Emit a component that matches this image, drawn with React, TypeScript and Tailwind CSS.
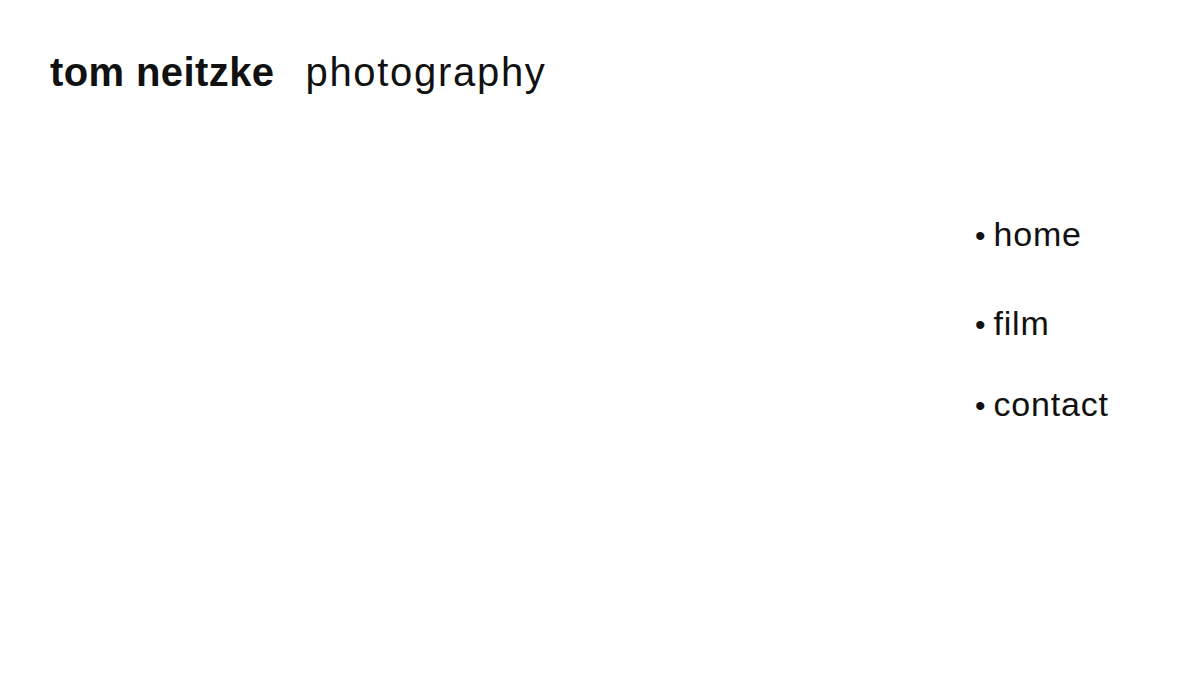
export default function App() {
  const navItems = [
    { label: 'home', mt: 'mt-0' },
    { label: 'film', mt: 'mt-[49px]' },
    { label: 'contact', mt: 'mt-[41px]' },
  ];

  return (
    <div className="min-h-[675px] w-full bg-white text-[#111] font-['Liberation_Sans',Arial,sans-serif]">
      {/* ── Header ── */}
      <header className="flex items-baseline gap-[31px] pl-[50px] pt-[48px]">
        <span className="text-[40px] font-bold leading-[48px] tracking-[0.4px]">tom neitzke</span>
        <span className="text-[40px] font-normal leading-[48px] tracking-[1.7px]">photography</span>
      </header>

      {/* ── Nav ── */}
      <nav className="flex justify-end pr-[90px] pt-[119px]">
        <ul className="flex w-[135px] flex-col">
          {navItems.map((item) => (
            <li key={item.label} className={`flex items-baseline gap-[8px] text-[34px] leading-[39px] ${item.mt}`}>
              <span className="text-[30px]">•</span>
              <span className="tracking-[0.8px]">{item.label}</span>
            </li>
          ))}
        </ul>
      </nav>
    </div>
  );
}
